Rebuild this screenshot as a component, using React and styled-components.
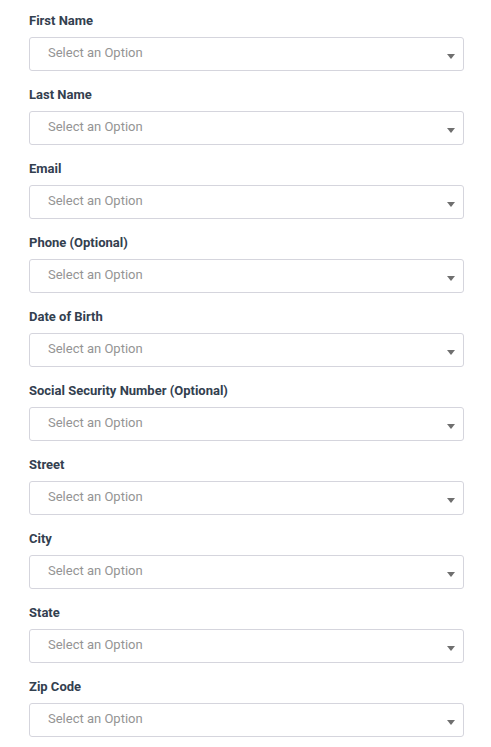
import React from "react";
import styled, { createGlobalStyle } from "styled-components";

const fields = [
  "First Name",
  "Last Name",
  "Email",
  "Phone (Optional)",
  "Date of Birth",
  "Social Security Number (Optional)",
  "Street",
  "City",
  "State",
  "Zip Code",
];

export default function App() {
  return (
    <>
      <GlobalStyle />
      <Form>
        {fields.map((label) => (
          <Field key={label}>
            <Label>{label}</Label>
            <SelectBox>
              <Placeholder>Select an Option</Placeholder>
              <Caret />
            </SelectBox>
          </Field>
        ))}
      </Form>
    </>
  );
}

const GlobalStyle = createGlobalStyle`
  body {
    margin: 0;
    background: #ffffff;
    font-family: Roboto, "Liberation Sans", sans-serif;
  }
`;

const Form = styled.div`
  display: flex;
  flex-direction: column;
  gap: 16px;
  padding: 13px 0 0 29px;
  width: 435px;
`;

const Field = styled.div`
  display: flex;
  flex-direction: column;
`;

const Label = styled.label`
  font-size: 13px;
  font-weight: 700;
  line-height: 16px;
  color: #33404f;
  margin-bottom: 8px;
`;

const SelectBox = styled.div`
  display: flex;
  align-items: center;
  justify-content: space-between;
  height: 34px;
  box-sizing: border-box;
  border: 1px solid #d5d5dd;
  border-radius: 3px;
  padding: 0 8px 0 18px;
`;

const Placeholder = styled.span`
  font-size: 13px;
  color: #949494;
  margin-bottom: 4px;
`;

const Caret = styled.span`
  width: 0;
  height: 0;
  margin-top: 5px;
  border-left: 4px solid transparent;
  border-right: 4px solid transparent;
  border-top: 5px solid #6f6f6f;
`;
